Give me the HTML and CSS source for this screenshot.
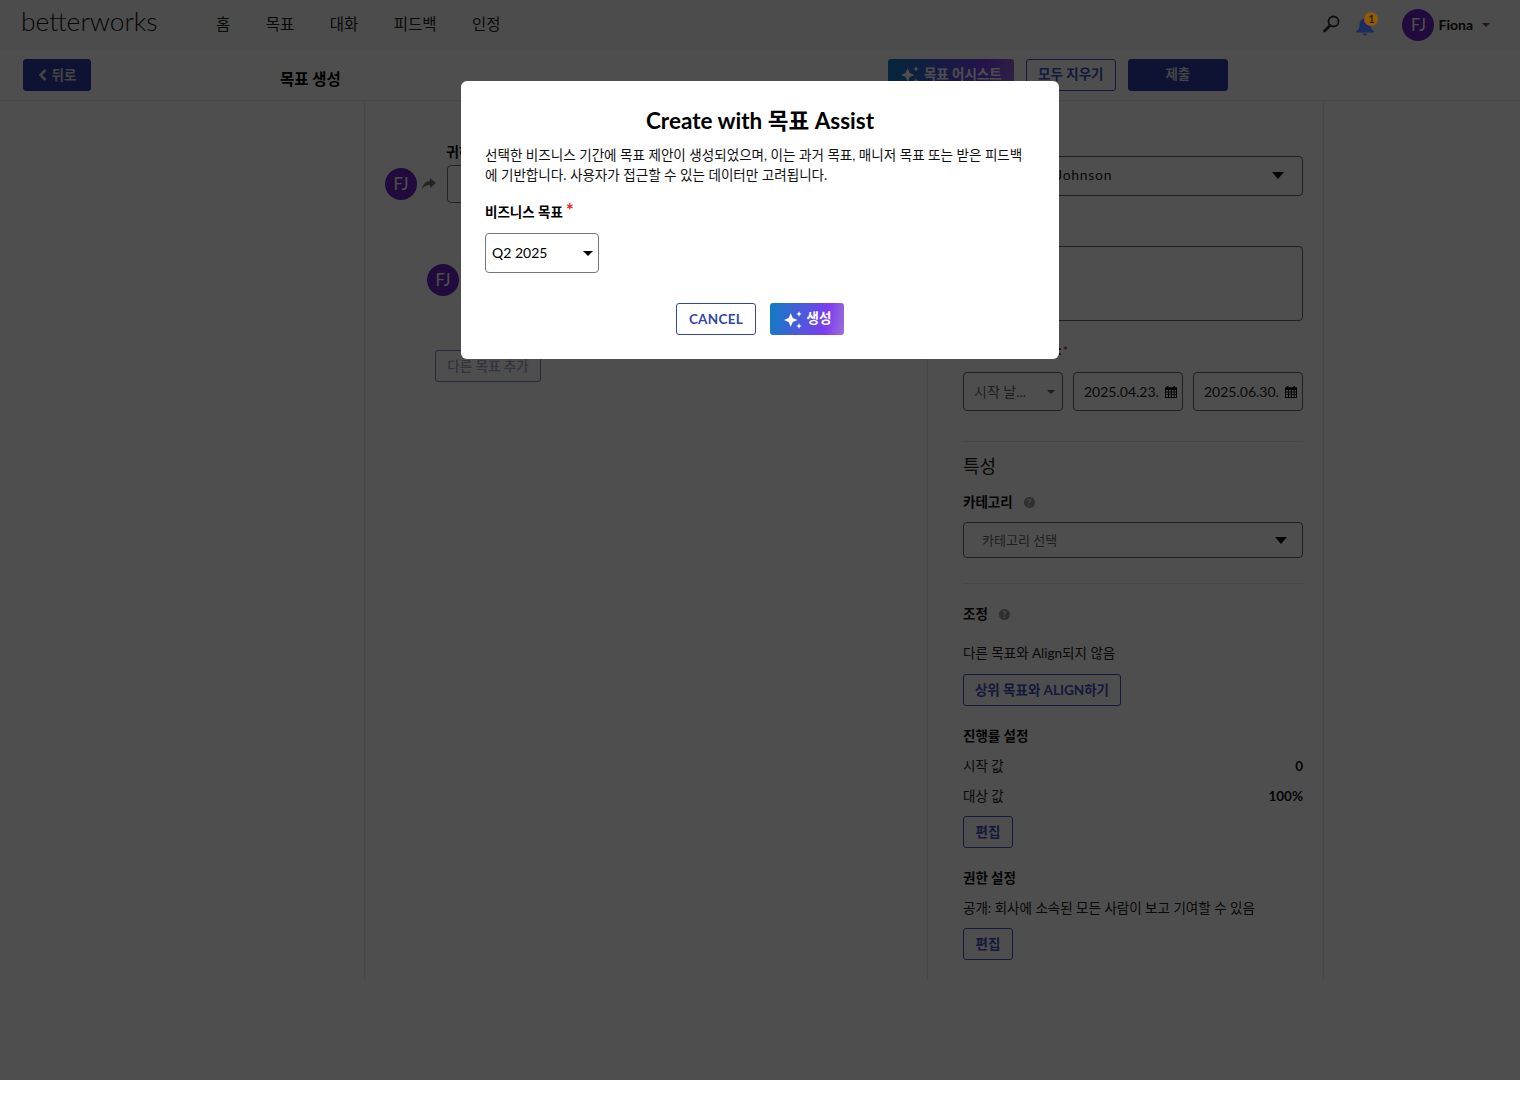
FILE: index.html
```html
<!DOCTYPE html>
<html lang="ko">
<head>
    <meta charset="UTF-8">
    <title>목표 생성</title>
    <link rel="stylesheet" href="styles.css">
</head>
<body>
<svg class="defs" width="0" height="0">
    <symbol id="spark" viewBox="0 0 20 20">
        <path d="M7.700 4.300 9.800 8.900 14.400 11 9.800 13.100 7.700 17.700 5.600 13.100 1 11 5.600 8.900Z"/>
        <path d="M16 2 16.800 4.200 19 5 16.800 5.800 16 8 15.200 5.800 13 5 15.200 4.200Z"/>
        <path d="M16 14 16.800 16.200 19 17 16.800 17.800 16 20 15.200 17.800 13 17 15.200 16.200Z"/>
    </symbol>
    <symbol id="cal" viewBox="0 0 12 12">
        <path d="M2 0h1.500v1.200h5V0H10v1.200h2V12H0V1.200h2zM1 4v1.600h2V4zm3 0v1.600h1.800V4zm2.800 0v1.600H8.700V4zM9.600 4v1.600H11V4zM1 6.500v1.700h2V6.500zm3 0v1.700h1.800V6.500zm2.800 0v1.700h1.900V6.500zm2.800 0v1.700H11V6.500zM1 9.100V11h2V9.100zm3 0V11h1.800V9.100zm2.800 0V11h1.900V9.100zm2.800 0V11H11V9.100z"/>
    </symbol>
    <symbol id="share" viewBox="0 0 14 12">
        <path d="M8 0 14 5 8 10V7C4.500 7 2 8 0 11.500 .5 7 3 3.200 8 3z"/>
    </symbol>
</svg>

<div class="app">
    <header class="topbar">
        <span class="logo">betterworks</span>
        <nav class="nav">
            <a>홈</a>
            <a>목표</a>
            <a>대화</a>
            <a>피드백</a>
            <a>인정</a>
        </nav>
        <div class="top-right">
            <svg class="search" viewBox="0 0 17 18" width="17" height="18">
                <circle cx="10.500" cy="6.500" r="5" fill="none" stroke="currentColor" stroke-width="1.800"/>
                <path d="M7 10.500 1.500 16" stroke="currentColor" stroke-width="2.600" stroke-linecap="round"/>
            </svg>
            <div class="bell-wrap">
                <svg class="bell" viewBox="0 0 20 20" width="20" height="20">
                    <path d="M10 1.500c1 0 1.500.7 1.600 1.500C14.300 3.800 15.500 6 15.500 9c0 3 1 4.500 3.500 6.500v1H1v-1C3.500 13.500 4.500 12 4.500 9c0-3 1.200-5.200 3.900-6C8.500 2.200 9 1.500 10 1.500zM7.800 17.500h4.400c-.3 1.200-1.100 2-2.200 2s-1.900-.8-2.200-2z"/>
                </svg>
                <span class="badge">1</span>
            </div>
            <span class="avatar">FJ</span>
            <span class="me">Fiona</span>
            <i class="caret caret-sm"></i>
        </div>
    </header>

    <div class="subbar">
        <button class="btn btn-solid btn-back">
            <svg viewBox="0 0 10 12" width="10" height="12"><path d="M7.500 1 2.500 6l5 5" fill="none" stroke="currentColor" stroke-width="2.600"/></svg>
            뒤로
        </button>
        <h1 class="page-title">목표 생성</h1>
        <div class="sub-actions">
            <button class="btn btn-grad btn-assist">
                <svg width="20" height="20"><use href="#spark"/></svg>
                목표 어시스트
            </button>
            <button class="btn btn-line btn-clear">모두 지우기</button>
            <button class="btn btn-solid btn-submit">제출</button>
        </div>
    </div>

    <main class="columns">
        <aside class="col-left"></aside>

        <section class="col-center">
            <div class="goal-head">귀하의 목표</div>
            <div class="goal-row">
                <span class="avatar">FJ</span>
                <svg class="share" width="14" height="12"><use href="#share"/></svg>
                <div class="goal-input"></div>
            </div>
            <div class="kr-row">
                <span class="avatar">FJ</span>
                <div class="goal-input"></div>
            </div>
            <button class="btn btn-line btn-more">다른 목표 추가</button>
        </section>

        <section class="col-right">
            <div class="field field-owner">Fiona Johnson<i class="caret"></i></div>
            <div class="field field-desc"></div>
            <div class="lbl lbl-period">비즈니스 기간 설정: <b class="star">*</b></div>
            <div class="date-row">
                <div class="field date-pick"><span class="muted">시작 날...</span><i class="caret caret-sm"></i></div>
                <div class="field date-val">2025.04.23.<svg width="12" height="12"><use href="#cal"/></svg></div>
                <div class="field date-val">2025.06.30.<svg width="12" height="12"><use href="#cal"/></svg></div>
            </div>
            <hr class="rule rule-a">
            <h2 class="sec-title">특성</h2>
            <div class="lbl lbl-help lbl-cat">카테고리 <span class="help">?</span></div>
            <div class="field field-cat"><span class="muted">카테고리 선택</span><i class="caret"></i></div>
            <hr class="rule rule-b">
            <div class="lbl lbl-help">조정 <span class="help">?</span></div>
            <p class="txt txt-align">다른 목표와 Align되지 않음</p>
            <button class="btn btn-line btn-align">상위 목표와 ALIGN하기</button>
            <div class="lbl lbl-progress">진행률 설정</div>
            <div class="kv"><span>시작 값</span><b>0</b></div>
            <div class="kv"><span>대상 값</span><b>100%</b></div>
            <button class="btn btn-line btn-edit">편집</button>
            <div class="lbl lbl-perm">권한 설정</div>
            <p class="txt txt-perm">공개: 회사에 소속된 모든 사람이 보고 기여할 수 있음</p>
            <button class="btn btn-line btn-edit">편집</button>
        </section>
    </main>

    <div class="backdrop">
        <div class="modal">
            <h3 class="modal-title">Create with 목표 Assist</h3>
            <p class="modal-text">선택한 비즈니스 기간에 목표 제안이 생성되었으며, 이는 과거 목표, 매니저 목표 또는 받은 피드백에 기반합니다. 사용자가 접근할 수 있는 데이터만 고려됩니다.</p>
            <div class="modal-label">비즈니스 목표 <b class="star-big">*</b></div>
            <div class="modal-select">Q2 2025<i class="caret caret-black"></i></div>
            <div class="modal-actions">
                <button class="btn btn-line btn-cancel">CANCEL</button>
                <button class="btn btn-grad btn-make">
                    <svg width="20" height="20"><use href="#spark"/></svg>
                    <span>생성</span>
                </button>
            </div>
        </div>
    </div>
</div>
</body>
</html>
```

FILE: styles.css
```css
* {box-sizing: border-box;}
body {margin: 0; background: #fff; color: #111; font: 14px/20px Lato, "Noto Sans CJK KR", sans-serif;}
.defs {position: absolute;}
button {font: inherit; cursor: pointer;}
p, h1, h2, h3 {margin: 0;}

.app {position: relative; width: 1520px; height: 1080px; background: #fff; overflow: hidden;}

/* top bar */
.topbar {display: flex; align-items: center; height: 50px; padding-left: 21px; background: #f7f7f7;}
.logo {width: 195px; font-size: 26.400px; font-weight: 300; line-height: 42px; color: #111; margin-top: -8px;}
.nav {display: flex; gap: 35.500px; margin-top: -2px; font-size: 15.500px; color: #222;}
.top-right {display: flex; align-items: center; margin-left: auto; padding-right: 30px;}
.search {color: #333; margin: -2px 16px 0 0;}
.bell-wrap {position: relative; width: 20px; height: 20px; margin: 2px 27px 0 -1px; z-index: 3;}
.bell {display: block; fill: #1b2c62;}
.badge {position: absolute; top: -4px; left: 9px; width: 14px; height: 14px; border-radius: 50%; background: #8f5a0c; color: #111; font-size: 11px; line-height: 14px; text-align: center;}
.avatar {display: inline-flex; align-items: center; justify-content: center; flex: none; width: 32px; height: 32px; border-radius: 50%; background: #6a25c4; color: #fff; font-size: 16.500px;}
.me {margin: 0 9px 0 4px; font-weight: 700; font-size: 14px; color: #111;}

.caret {display: inline-block; width: 0; height: 0; border: 6px solid transparent; border-top: 7px solid #111; border-bottom: 0;}
.caret-sm {border-width: 4px 4px 0; border-top-color: #555;}
.caret-black {border-width: 5px 5px 0; border-top-color: #000;}

/* sub bar */
.subbar {display: flex; align-items: flex-start; height: 51px; padding: 9px 0 0 23px; background: #fff; border-bottom: 1px solid #e4e4e4;}
.page-title {margin: 10px 0 0 189px; font-size: 15.500px; font-weight: 700; color: #000; line-height: 20px;}
.sub-actions {display: flex; margin-left: 547px;}
.btn {display: inline-flex; align-items: center; justify-content: center; height: 32px; padding: 0; border-radius: 3px; font-size: 13.500px; font-weight: 700; border: 1px solid #2f3ca8; background: #fff; color: #2f3ca8;}
.btn-solid {background: #2f3ca8; color: #ddd;}
.btn-grad {border: 0; color: #fff; background: linear-gradient(100deg, #0e7dc2, #7d3df0 75%, #9a6fd8);}
.btn-line {background: transparent; color: #4352c0; border-color: #4352c0;}
.btn-back {width: 68px; gap: 4px;}
.btn-assist {width: 126px; margin-right: 12px; gap: 4px;}
.btn-assist svg {fill: #fff;}
.btn-clear {width: 90px; margin-right: 12px;}
.btn-submit {width: 100px;}
.sub-actions .btn {padding-bottom: 3px;}
.btn-back {padding-bottom: 1px;}

/* columns */
.columns {display: flex; height: 879px;}
.col-left {width: 365px; border-right: 1px solid #e4e4e4;}
.col-center {width: 563px; padding: 41px 0 0 20px; border-right: 1px solid #e4e4e4;}
.col-right {width: 396px; padding: 55px 20px 0 35px; border-right: 1px solid #e4e4e4;}

.goal-head {margin-left: 61px; font-weight: 700; font-size: 14px; color: #111;}
.goal-row {display: flex; align-items: center; margin-top: 3px;}
.share {margin: 0 11px 0 5px; fill: #777;}
.goal-input {flex: 1; height: 38px; margin-right: 20px; border: 1px solid #777; border-radius: 4px;}
.kr-row {display: flex; align-items: center; gap: 10px; margin: 58px 0 0 42px;}
.btn-more {width: 106px; margin: 51px 0 0 50px; color: #a0a6cc; border-color: #7f87c4; font-weight: 500;}

.lbl {font-size: 13.500px; font-weight: 700; color: #111; line-height: 20px;}
.field {display: flex; align-items: center; justify-content: space-between; border: 1px solid #666; border-radius: 4px; color: #222;}
.field-owner {height: 40px; padding: 0 18px 2px 51px; letter-spacing: .7px;}
.field-desc {height: 75px; margin-top: 50px;}
.lbl-period {margin-top: 19px; font-size: 13px; letter-spacing: -.7px;}
.star {color: #e53030; font-size: 12px; letter-spacing: 0;}
.star-big {position: relative; top: 0; color: #e53030; font-size: 18px; line-height: 0;}
.date-row {display: flex; gap: 10px; margin-top: 11px;}
.date-row .field {height: 39px;}
.date-pick {width: 100px; padding: 0 7px 0 10px;}
.date-val {width: 110px; padding: 0 5px 0 10px;}
.date-val svg {fill: #111; flex: none;}
.muted {color: #666;}

.rule {height: 1px; margin: 0; border: 0; background: #e4e4e4;}
.rule-a {margin-top: 30px;}
.sec-title {margin-top: 13px; font-size: 18px; font-weight: 400; line-height: 22px; color: #222;}
.lbl-help {display: flex; align-items: center;}
.lbl-cat {margin-top: 15px;}
.help {display: inline-block; width: 11px; height: 11px; margin-left: 11px; border-radius: 50%; background: #999; color: #fff; font-size: 9px; font-weight: 700; line-height: 11px; text-align: center;}
.field-cat {height: 36px; margin-top: 10px; padding: 0 15px 0 18px;}
.field-cat .muted {font-size: 13px;}
.rule-b {margin: 25px 0 20px;}
.txt {color: #222; font-size: 13.500px;}
.txt-align {margin-top: 19px;}
.btn-align {display: flex; width: 158px; margin-top: 11px;}
.lbl-progress {margin-top: 20px;}
.kv {display: flex; justify-content: space-between; margin-top: 10px; font-size: 13.500px; color: #222;}
.kv b {color: #111;}
.btn-edit {display: flex; width: 50px; margin-top: 10px;}
.lbl-perm {margin-top: 20px;}
.txt-perm {margin-top: 10px;}

/* modal */
.backdrop {position: absolute; inset: 0; z-index: 2; background: rgba(0, 0, 0, .695);}
.modal {position: absolute; left: 461px; top: 81px; width: 598px; height: 278px; padding: 26px 24px 0; background: #fff; border-radius: 6px; color: #000;}
.modal-title {font-size: 22.500px; font-weight: 700; line-height: 28px; text-align: center;}
.modal-text {max-width: 545px; margin-top: 10px; font-size: 13.550px; line-height: 20px; color: #111;}
.modal-label {margin-top: 17px; font-size: 13.500px; font-weight: 700; line-height: 20px;}
.modal-select {display: flex; align-items: center; justify-content: space-between; width: 114px; height: 40px; margin-top: 11px; padding: 0 5px 0 6px; border: 1px solid #777; border-radius: 4px;}
.modal-actions {display: flex; justify-content: center; gap: 14px; margin-top: 30px;}
.btn-cancel {width: 80px; letter-spacing: .3px; color: #3346a8; border-color: #3346a8;}
.btn-make {width: 74px; gap: 4px;}
.btn-make svg {fill: #fff;}
.btn-make span {margin-top: -2px;}
```
